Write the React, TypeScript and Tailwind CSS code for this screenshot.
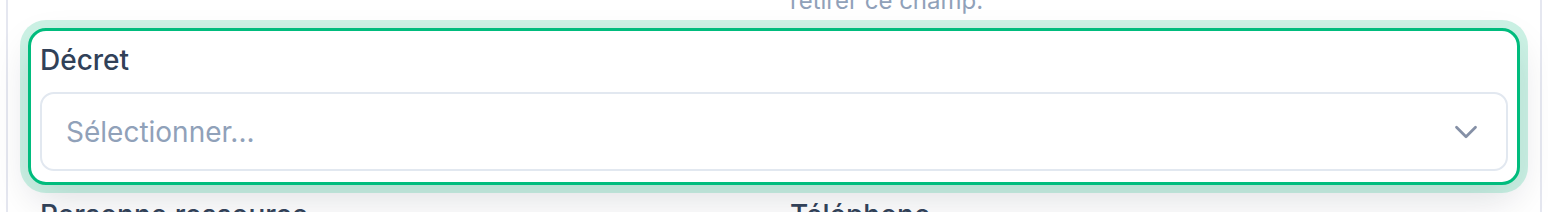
import { ChevronDown } from "lucide-react";

export default function App() {
  return (
    <div className="h-[212px] overflow-hidden bg-white font-['Inter',sans-serif]">
      <div className="mx-[6px] h-full border-x-2 border-[#e5e7f0] bg-white px-[32px]">
        {/* tail of the previous row's help text */}
        <div className="grid grid-cols-2 gap-x-[32px]">
          <div />
          <p className="mt-[-15px] text-[24px] leading-[32px] text-slate-400">
            retirer ce champ.
          </p>
        </div>

        {/* highlighted field */}
        <div className="mx-[-12px] mt-[11px] rounded-[18px] border-[3px] border-emerald-500 bg-white px-[9px] pb-[11px] pt-[9px] shadow-[0_16px_40px_-4px_rgba(15,23,42,0.15)] ring-[8px] ring-emerald-500/20">
          <label className="block text-[28px] font-medium leading-[40px] text-slate-700">
            Décret
          </label>
          <button
            type="button"
            className="mt-[12px] flex h-[79px] w-full items-center justify-between rounded-[14px] border-2 border-slate-200 bg-white pl-[24px] pr-[21px] text-left"
          >
            <span className="text-[28px] leading-[40px] text-slate-400">Sélectionner...</span>
            <ChevronDown size={38} strokeWidth={1.75} className="text-[#8590a6]" />
          </button>
        </div>

        <div className="mt-[10px] grid grid-cols-2 gap-x-[32px]">
          <label className="block text-[28px] font-medium leading-[40px] text-slate-700">
            Personne ressource
          </label>
          <label className="block text-[28px] font-medium leading-[40px] text-slate-700">
            Téléphone
          </label>
        </div>
      </div>
    </div>
  );
}
